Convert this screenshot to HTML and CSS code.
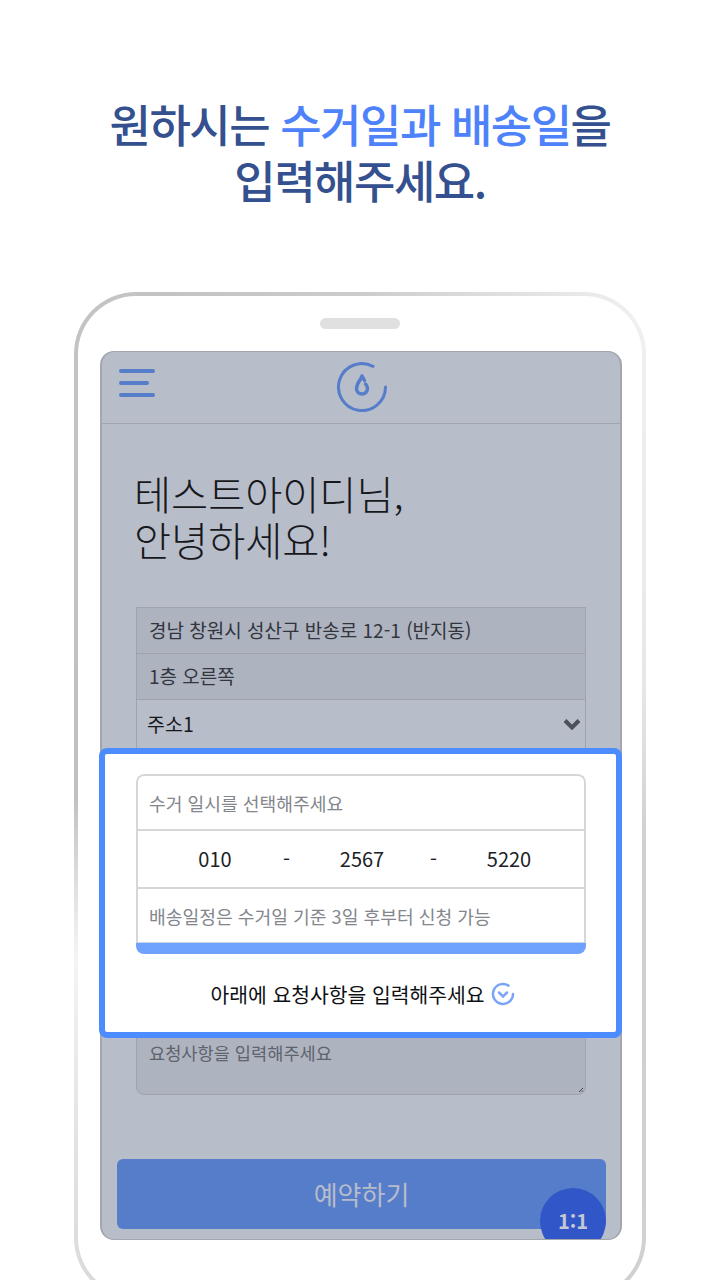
FILE: index.html
```html
<!DOCTYPE html>
<html lang="ko">
<head>
<meta charset="utf-8">
<title>예약하기</title>
<link rel="stylesheet" href="styles.css">
</head>
<body>
<main class="page">
  <h1 class="title">원하시는 <span class="accent">수거일과 배송일</span>을<br>입력해주세요.</h1>
  <section class="phone">
    <div class="phone-inner">
      <div class="speaker"></div>
      <div class="screen">
        <header class="topbar">
          <svg class="menu-icon" width="36" height="28" viewBox="0 0 36 28" aria-hidden="true">
            <path d="M2 2H34M2 14H28M2 26H34" fill="none" stroke="#567dca" stroke-width="4" stroke-linecap="round"/>
          </svg>
          <svg class="logo" width="52" height="52" viewBox="0 0 52 52" aria-hidden="true">
            <path d="M37 5.300A23.500 23.500 0 1 0 49.500 26" fill="none" stroke="#567dca" stroke-width="3" stroke-linecap="round"/>
            <path d="M26 15C25 19 20.500 22 20.500 27.500A5.500 5.500 0 0 0 31.500 27.500C31.500 25.500 30.500 24 29.500 23M26 15L28.500 19.500" fill="none" stroke="#567dca" stroke-width="3.500" stroke-linecap="round" stroke-linejoin="round"/>
          </svg>
        </header>
        <div class="content">
          <h2 class="greeting">테스트아이디님,<br>안녕하세요!</h2>
          <div class="address">
            <div class="addr-row addr-filled">경남 창원시 성산구 반송로 12-1 (반지동)</div>
            <div class="addr-row addr-filled">1층 오른쪽</div>
            <div class="addr-row addr-select">
              <span>주소1</span>
              <svg width="18" height="12" viewBox="0 0 18 12" aria-hidden="true"><path d="M2 2.500L9 9.500L16 2.500" fill="none" stroke="#4d5058" stroke-width="4"/></svg>
            </div>
          </div>
          <div class="request">요청사항을 입력해주세요
            <svg class="grip" width="6" height="6" viewBox="0 0 6 6" aria-hidden="true"><path d="M1 5L5 1M3.500 5L5 3.500" stroke="#444" stroke-width="1"/></svg>
          </div>
        </div>
        <div class="submit">예약하기</div>
        <div class="chat">1:1</div>
      </div>
      <div class="highlight">
        <div class="card">
          <div class="card-row card-hint card-first">수거 일시를 선택해주세요</div>
          <div class="card-phone"><span class="num">010</span><span>-</span><span class="num">2567</span><span>-</span><span class="num">5220</span></div>
          <div class="card-row card-hint card-note">배송일정은 수거일 기준 3일 후부터 신청 가능</div>
          <div class="card-bar"></div>
        </div>
        <p class="prompt">아래에 요청사항을 입력해주세요
          <svg width="24" height="24" viewBox="0 0 24 24" aria-hidden="true">
            <path d="M17.500 3.600A10 10 0 1 0 22 12" fill="none" stroke="#7aa5f5" stroke-width="2.500" stroke-linecap="round"/>
            <path d="M8 10.500L12 14.500L16 10.500" fill="none" stroke="#7aa5f5" stroke-width="2.500" stroke-linecap="round"/>
          </svg>
        </p>
      </div>
    </div>
  </section>
</main>
</body>
</html>
```
FILE: styles.css
```css
* { box-sizing: border-box; }
html, body { margin: 0; padding: 0; background: #fff; }
body { font-family: "Noto Sans CJK KR", "Noto Sans", sans-serif; }
.page { width: 720px; height: 1280px; overflow: hidden; }
.title {
  margin: 0; padding-top: 96px; height: 292px;
  font-size: 45px; line-height: 56px; font-weight: 500;
  text-align: center; color: #34508f; letter-spacing: -1.500px;
}
.accent { color: #4d82fa; }
.phone {
  width: 572px; height: 1008px; margin-left: 74px; padding: 4px;
  border-radius: 62px;
  background: conic-gradient(#cccccc 0deg, #f0f0f0 30deg, #e6e6e6 70deg, #cfcfcf 100deg, #d2d2d2 200deg, #f5f5f5 240deg, #c0c0c0 270deg, #c4c4c4 340deg, #cccccc 360deg);
}
.phone-inner {
  position: relative; height: 100%; background: #fff; border-radius: 58px;
  padding: 22px 20px 0 22px;
}
.speaker { width: 80px; height: 11px; margin: 0 0 22px 220px; background: #e0e0e0; border-radius: 6px; }
.screen {
  position: relative; height: 889px; overflow: hidden;
  background: #b7bdc9; border: 2px solid #a3a6ad; border-top-width: 1px; border-bottom-width: 1px;
  border-radius: 14px;
}
.topbar {
  position: relative; height: 72px; border-bottom: 1px solid #a1a5b0;
  display: flex; justify-content: center;
}
.menu-icon { position: absolute; left: 17px; top: 17px; }
.logo { margin: 9px 0 0 2px; }
.content { padding: 46px 34px 0; }
.greeting {
  margin: 0 0 0 -2px; font-size: 40.300px; line-height: 46px; font-weight: 300; color: #17181c;
}
.address { margin-top: 45px; border: 1px solid #9ea3ad; border-bottom: 0; }
.addr-row {
  height: 46px; padding: 0 12px 2px; font-size: 19px; line-height: 44px;
  color: #33353c; display: flex; justify-content: space-between; align-items: center;
}
.addr-filled { background: #aeb3c0; border-bottom: 1px solid #9ea3ad; }
.addr-select { height: 60px; padding: 0 4px 12px 10px; color: #17181c; font-size: 19.500px; }
.request {
  position: relative; margin-top: 240px; height: 95px; padding: 40px 12px 0;
  font-size: 17.600px; line-height: 24px; color: #5f636c;
  background: #aeb3c0; border: 1px solid #9ea3ad; border-radius: 8px;
}
.grip { position: absolute; right: 1px; bottom: 1px; }
.submit {
  position: absolute; left: 15px; top: 807px; width: 489px; height: 70px;
  background: #567dca; border-radius: 6px; color: #b6bcc9;
  font-size: 26px; line-height: 70px; text-align: center;
}
.chat {
  position: absolute; left: 438px; top: 836px; width: 66px; height: 66px;
  border-radius: 50%; background: #3056c8; color: #c4c8d4;
  font-size: 20px; font-weight: 700; line-height: 66px; text-align: center;
}
.highlight {
  position: absolute; left: 21px; top: 452px; width: 523px; height: 290px;
  background: #fff; border: 6px solid #4d8cff; border-radius: 8px;
  padding: 20px 30px 0 31px;
}
.card { border-radius: 8px; overflow: hidden; }
.card-row { display: flex; align-items: center; padding: 0 11px; }
.card-hint {
  height: 53px; font-size: 18.200px; color: #83868c;
  border-left: 2px solid #d6d6d6; border-right: 2px solid #d6d6d6;
}
.card-first { height: 55px; border-top: 2px solid #d6d6d6; border-radius: 8px 8px 0 0; }
.card-note { height: 55px; border-top: 2px solid #d6d6d6; }
.card-phone {
  height: 58px; border: 2px solid #d6d6d6; border-width: 2px 2px 0;
  display: grid; grid-template-columns: 70px 11px 70px 11px 70px; column-gap: 33px;
  align-items: center; padding: 0 0 2px 42px;
  font-size: 20px; color: #202125;
}
.num { text-align: center; }
.card-bar { height: 12px; background: #6fa2ff; border-top: 1px solid #c8d3e6; }
.prompt {
  margin: 25px 0 0; padding-left: 3px; display: flex; justify-content: center; align-items: center; gap: 6px;
  font-size: 20.400px; line-height: 30px; font-weight: 400; color: #0f1013;
}
```
